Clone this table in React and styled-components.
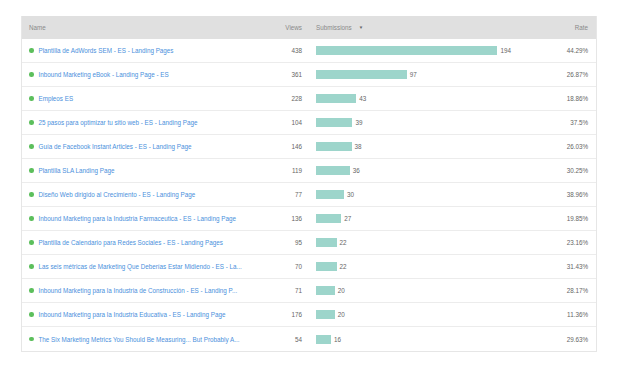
import React from "react";
import styled, { createGlobalStyle } from "styled-components";

const Global = createGlobalStyle`
  html, body { margin: 0; padding: 0; background: #fff; }
  body { font-family: "Liberation Sans", Arial, sans-serif; }
`;

const Page = styled.div`
  padding: 16px 0 0 21px;
`;

const Table = styled.div`
  width: 576px;
  box-sizing: border-box;
  border: 1px solid #e6e6e6;
  border-top: none;
  font-size: 6.3px;
`;

const Row = styled.div`
  display: grid;
  grid-template-columns: 213px 60px 14px 200px 72px;
  align-items: center;
  box-sizing: border-box;
  height: ${(p) => (p.$head ? "23px" : "24px")};
  padding: 0 7px;
  background: ${(p) => (p.$head ? "#e0e0e0" : "#fff")};
  border-bottom: ${(p) => (p.$head || p.$last ? "none" : "1px solid #ececec")};
  color: ${(p) => (p.$head ? "#8a8a8a" : "#666")};
`;

const NameCell = styled.div`
  display: flex;
  align-items: center;
  gap: 5px;
  white-space: nowrap;
`;

const Dot = styled.span`
  width: 4.5px;
  height: 4.5px;
  border-radius: 50%;
  background: #5cbf5c;
  flex: none;
`;

const Link = styled.span`
  color: #4a90dc;
`;

const Num = styled.div`
  text-align: right;
  grid-column: ${(p) => p.$col};
`;

const SubCell = styled.div`
  grid-column: 4;
  display: flex;
  align-items: center;
  gap: 3px;
  white-space: nowrap;
`;

const Bar = styled.span`
  display: block;
  height: 9px;
  background: #9dd5cb;
`;

const Caret = styled.span`
  font-size: 4.5px;
  margin-left: 4px;
  color: #666;
`;

const rows = [
  ["Plantilla de AdWords SEM - ES - Landing Pages", 438, 194, "44.29%"],
  ["Inbound Marketing eBook - Landing Page - ES", 361, 97, "26.87%"],
  ["Empleos ES", 228, 43, "18.86%"],
  ["25 pasos para optimizar tu sitio web - ES - Landing Page", 104, 39, "37.5%"],
  ["Guía de Facebook Instant Articles - ES - Landing Page", 146, 38, "26.03%"],
  ["Plantilla SLA Landing Page", 119, 36, "30.25%"],
  ["Diseño Web dirigido al Crecimiento - ES - Landing Page", 77, 30, "38.96%"],
  ["Inbound Marketing para la Industria Farmaceutica - ES - Landing Page", 136, 27, "19.85%"],
  ["Plantilla de Calendario para Redes Sociales - ES - Landing Pages", 95, 22, "23.16%"],
  ["Las seis métricas de Marketing Que Deberías Estar Midiendo - ES - La...", 70, 22, "31.43%"],
  ["Inbound Marketing para la Industria de Construcción - ES - Landing P...", 71, 20, "28.17%"],
  ["Inbound Marketing para la Industria Educativa - ES - Landing Page", 176, 20, "11.36%"],
  ["The Six Marketing Metrics You Should Be Measuring... But Probably A...", 54, 16, "29.63%"],
];

export default function App() {
  return (
    <Page>
      <Global />
      <Table>
        <Row $head>
          <NameCell>Name</NameCell>
          <Num $col={2}>Views</Num>
          <SubCell>
            Submissions<Caret>▼</Caret>
          </SubCell>
          <Num $col={5}>Rate</Num>
        </Row>
        {rows.map(([name, views, subs, rate], i) => (
          <Row key={i} $last={i === rows.length - 1}>
            <NameCell>
              <Dot />
              <Link>{name}</Link>
            </NameCell>
            <Num $col={2}>{views}</Num>
            <SubCell>
              <Bar style={{ width: `${subs * 0.935}px` }} />
              {subs}
            </SubCell>
            <Num $col={5}>{rate}</Num>
          </Row>
        ))}
      </Table>
    </Page>
  );
}
